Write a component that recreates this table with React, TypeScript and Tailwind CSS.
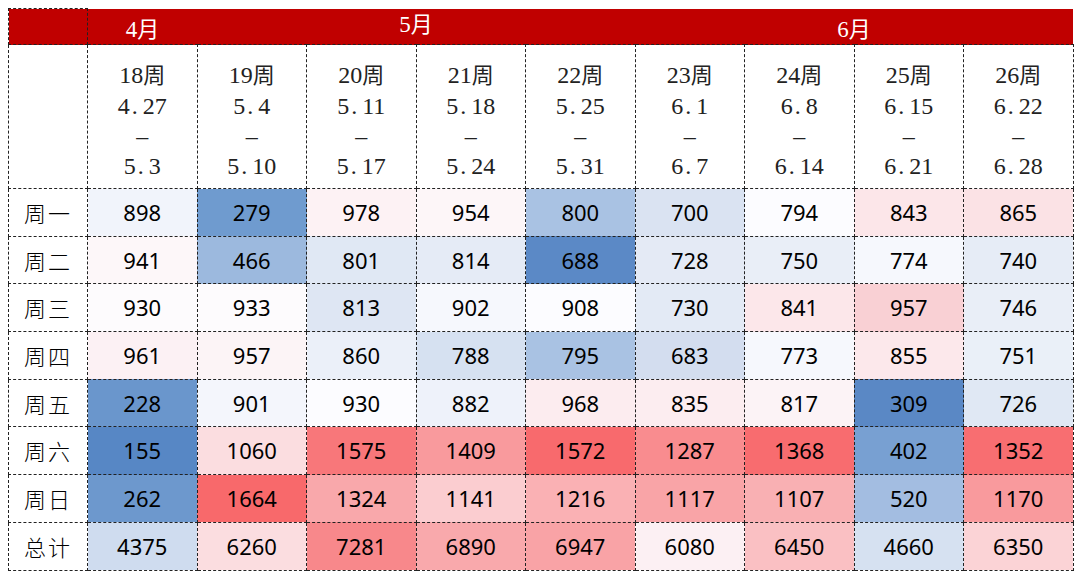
const weeks = [
  { no: "18", from: ["4", "27"], to: ["5", "3"] },
  { no: "19", from: ["5", "4"], to: ["5", "10"] },
  { no: "20", from: ["5", "11"], to: ["5", "17"] },
  { no: "21", from: ["5", "18"], to: ["5", "24"] },
  { no: "22", from: ["5", "25"], to: ["5", "31"] },
  { no: "23", from: ["6", "1"], to: ["6", "7"] },
  { no: "24", from: ["6", "8"], to: ["6", "14"] },
  { no: "25", from: ["6", "15"], to: ["6", "21"] },
  { no: "26", from: ["6", "22"], to: ["6", "28"] },
];

type Cell = [string, string];

const rows: { label: string; cells: Cell[] }[] = [
  {
    label: "周一",
    cells: [
      ["898", "bg-[#f1f4fb]"],
      ["279", "bg-[#6f9bcf]"],
      ["978", "bg-[#fdf2f4]"],
      ["954", "bg-[#fdf6f8]"],
      ["800", "bg-[#a9c2e3]"],
      ["700", "bg-[#dae3f2]"],
      ["794", "bg-[#fcfcff]"],
      ["843", "bg-[#fce6e9]"],
      ["865", "bg-[#fbe2e5]"],
    ],
  },
  {
    label: "周二",
    cells: [
      ["941", "bg-[#fdf7f9]"],
      ["466", "bg-[#9cb9de]"],
      ["801", "bg-[#e0e8f4]"],
      ["814", "bg-[#e5ebf6]"],
      ["688", "bg-[#5b89c6]"],
      ["728", "bg-[#e4eaf5]"],
      ["750", "bg-[#e9eef7]"],
      ["774", "bg-[#f6f8fd]"],
      ["740", "bg-[#e6ecf6]"],
    ],
  },
  {
    label: "周三",
    cells: [
      ["930", "bg-[#fdfbfd]"],
      ["933", "bg-[#fdfbfd]"],
      ["813", "bg-[#dee6f3]"],
      ["902", "bg-[#f6f8fd]"],
      ["908", "bg-[#fcfcff]"],
      ["730", "bg-[#e3eaf5]"],
      ["841", "bg-[#fce7ea]"],
      ["957", "bg-[#f9d0d4]"],
      ["746", "bg-[#e9eef7]"],
    ],
  },
  {
    label: "周四",
    cells: [
      ["961", "bg-[#fcf1f4]"],
      ["957", "bg-[#fcf4f6]"],
      ["860", "bg-[#ebf0f9]"],
      ["788", "bg-[#d6e1f1]"],
      ["795", "bg-[#a9c2e3]"],
      ["683", "bg-[#d3ddef]"],
      ["773", "bg-[#f6f8fd]"],
      ["855", "bg-[#fce8eb]"],
      ["751", "bg-[#eaf0f8]"],
    ],
  },
  {
    label: "周五",
    cells: [
      ["228", "bg-[#6a96cc]"],
      ["901", "bg-[#f4f6fc]"],
      ["930", "bg-[#fcfcff]"],
      ["882", "bg-[#eef2fa]"],
      ["968", "bg-[#fcecef]"],
      ["835", "bg-[#fcedf0]"],
      ["817", "bg-[#fcf3f6]"],
      ["309", "bg-[#5a88c5]"],
      ["726", "bg-[#e0e8f4]"],
    ],
  },
  {
    label: "周六",
    cells: [
      ["155", "bg-[#5787c5]"],
      ["1060", "bg-[#fbdde0]"],
      ["1575", "bg-[#f8777a]"],
      ["1409", "bg-[#f99a9d]"],
      ["1572", "bg-[#f86a6d]"],
      ["1287", "bg-[#f98c8f]"],
      ["1368", "bg-[#f86c6f]"],
      ["402", "bg-[#78a0d2]"],
      ["1352", "bg-[#f86e71]"],
    ],
  },
  {
    label: "周日",
    cells: [
      ["262", "bg-[#6d98cd]"],
      ["1664", "bg-[#f8696b]"],
      ["1324", "bg-[#f9a8ab]"],
      ["1141", "bg-[#fbcdd0]"],
      ["1216", "bg-[#fab1b4]"],
      ["1117", "bg-[#f9a4a7]"],
      ["1107", "bg-[#f9b0b3]"],
      ["520", "bg-[#a3bde1]"],
      ["1170", "bg-[#f99a9d]"],
    ],
  },
  {
    label: "总计",
    cells: [
      ["4375", "bg-[#cfdcef]"],
      ["6260", "bg-[#fbdde0]"],
      ["7281", "bg-[#f8888b]"],
      ["6890", "bg-[#f9a9ac]"],
      ["6947", "bg-[#f9a3a6]"],
      ["6080", "bg-[#fcf0f3]"],
      ["6450", "bg-[#fac0c3]"],
      ["4660", "bg-[#d6e1f1]"],
      ["6350", "bg-[#fbd3d6]"],
    ],
  },
];

const serif = "font-['Liberation_Serif','Noto_Sans_CJK_SC',serif]";
const sans = "font-['Noto_Sans','Noto_Sans_CJK_SC',sans-serif]";

function DateText({ parts }: { parts: string[] }) {
  return (
    <div>
      {parts[0]}
      <span className="inline-block w-[13px] pl-[2px] text-left">.</span>
      {parts[1]}
    </div>
  );
}

export default function App() {
  return (
    <main className="h-[578px] w-[1080px] overflow-hidden bg-white pl-2 pt-2 text-black">
      <table className="w-[1064px] table-fixed border-collapse">
        <colgroup>
          <col className="w-[79px]" />
          {weeks.map((w) => (
            <col key={w.no} className="w-[109.5px]" />
          ))}
        </colgroup>
        <thead>
          <tr className="h-[36px] bg-[#c00000]">
            <th className="border border-dashed border-[#222] p-0" />
            <th className={`p-0 pt-[10px] align-top text-center text-[23px] font-normal leading-[22px] text-white ${serif}`}>
              4<span className="text-[22px]">月</span>
            </th>
            <th colSpan={4} className={`p-0 pt-[5px] align-top text-center text-[23px] font-normal leading-[22px] text-white ${serif}`}>
              5<span className="text-[22px]">月</span>
            </th>
            <th colSpan={4} className={`p-0 pt-[10px] align-top text-center text-[23px] font-normal leading-[22px] text-white ${serif}`}>
              6<span className="text-[22px]">月</span>
            </th>
          </tr>
          <tr className="h-[144px]">
            <th className="border border-dashed border-[#222] p-0" />
            {weeks.map((w) => (
              <th
                key={w.no}
                className={`border border-dashed border-[#222] p-0 pt-[15px] align-top text-[24px] font-normal leading-[30px] text-[#222] ${serif}`}
              >
                <div>
                  {w.no}
                  <span className="text-[22px]">周</span>
                </div>
                <DateText parts={w.from} />
                <div>–</div>
                <DateText parts={w.to} />
              </th>
            ))}
          </tr>
        </thead>
        <tbody>
          {rows.map((r) => (
            <tr key={r.label} className="h-[47.7px]">
              <td className="border border-dashed border-[#222] p-0 text-center font-['Noto_Sans_CJK_SC',sans-serif] text-[22px] font-light tracking-[2px]">
                {r.label}
              </td>
              {r.cells.map(([v, bg], i) => (
                <td
                  key={i}
                  className={`border border-dashed border-[#222] p-0 text-center text-[22px] ${sans} ${bg}`}
                >
                  {v}
                </td>
              ))}
            </tr>
          ))}
        </tbody>
      </table>
    </main>
  );
}
